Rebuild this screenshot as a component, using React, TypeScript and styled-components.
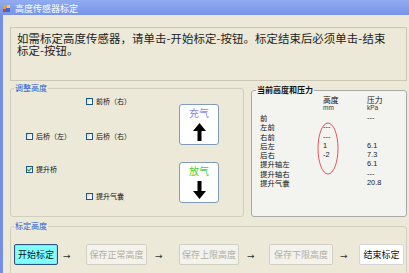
import React from "react"
import styled, { createGlobalStyle } from "styled-components"

const GlobalStyle = createGlobalStyle`
  html, body {
    margin: 0;
    padding: 0;
    background: #ece9d8;
    overflow: hidden;
  }
  body {
    font-family: "Noto Sans CJK SC", "Liberation Sans", sans-serif;
  }
`

const CJK = `"Noto Sans CJK SC", "Liberation Sans", sans-serif`
const LATIN = `"Liberation Sans", "Noto Sans CJK SC", sans-serif`

const Window = styled.div`
  width: 409px;
  height: 273px;
  display: flex;
  flex-direction: column;
  overflow: hidden;
`

const TitleBar = styled.div`
  height: 15px;
  flex: none;
  display: flex;
  align-items: center;
  gap: 5px;
  padding: 1px 0 0 3px;
  box-sizing: border-box;
  background: linear-gradient(#91acf0, #7794e6);
  color: #fff;
  font-family: ${CJK};
  font-size: 9px;
  line-height: 9px;
`

const Client = styled.div`
  flex: 1;
  min-height: 0;
  display: flex;
  flex-direction: column;
  border-left: 3px solid #7590e2;
  background: #ece9d8;
  padding: 12px 2px 0 7px;
`

const Notice = styled.div`
  height: 54px;
  flex: none;
  box-sizing: border-box;
  border: 1px solid #cbc8b8;
  padding: 4px 6px;
  font-family: ${CJK};
  font-size: 11.4px;
  line-height: 12px;
  letter-spacing: 0.1px;
  color: #1e1e1e;
`

const MidRow = styled.div`
  display: flex;
  align-items: flex-start;
  gap: 7px;
  margin-top: 3px;
`

const Group = styled.fieldset<{ $w: number; $h: number; $top?: number; $bg?: string; $edge?: string }>`
  margin: ${(p) => p.$top ?? 0}px 0 0 0;
  padding: 0;
  min-width: 0;
  box-sizing: border-box;
  width: ${(p) => p.$w}px;
  height: ${(p) => p.$h}px;
  flex: none;
  border: 1px solid ${(p) => p.$edge ?? "#d0cfbf"};
  border-radius: 3px;
  background: ${(p) => p.$bg ?? "transparent"};
`

const Legend = styled.legend<{ $strong?: boolean; $shift: number }>`
  padding: 0 1px;
  margin-left: ${(p) => p.$shift}px;
  font-family: ${CJK};
  font-size: 8px;
  line-height: 8px;
  font-weight: ${(p) => (p.$strong ? 700 : 400)};
  color: ${(p) => (p.$strong ? "#111" : "#2a5cd8")};
`

/* ---- adjust height group ---- */

const AdjustBody = styled.div`
  display: flex;
  align-items: flex-start;
  padding-left: 15px;
`

const CheckGrid = styled.div`
  display: grid;
  grid-template-columns: 60px 93px;
  grid-template-rows: 14px 35px 33px 27px;
  margin-top: 2px;
`

const CheckItem = styled.label<{ $col: number; $row: number }>`
  grid-column: ${(p) => p.$col};
  grid-row: ${(p) => p.$row};
  align-self: end;
  height: 14px;
  display: flex;
  align-items: center;
  gap: 3px;
  font-family: ${CJK};
  font-size: 7px;
  line-height: 7px;
  color: #111;
`

const Box = styled.span`
  width: 7px;
  height: 7px;
  box-sizing: border-box;
  border: 1px solid #1f5487;
  background: linear-gradient(135deg, #dcdbd3, #ffffff);
  display: inline-flex;
  align-items: center;
  justify-content: center;
`

const AirColumn = styled.div`
  display: flex;
  flex-direction: column;
  gap: 17px;
  margin-top: 12px;
`

const AirButton = styled.div`
  width: 40px;
  height: 41px;
  box-sizing: border-box;
  border: 1px solid #7f9db9;
  border-radius: 3px;
  background: #fff;
  display: flex;
  flex-direction: column;
  align-items: center;
  padding-top: 3px;
  gap: 5px;
`

const AirLabel = styled.span<{ $tone: string }>`
  font-family: ${CJK};
  font-size: 10px;
  line-height: 10px;
  color: ${(p) => p.$tone};
`

/* ---- current values group ---- */

const Table = styled.div`
  padding-left: 8px;
  margin-top: 1px;
`

const HeadGrid = styled.div`
  display: grid;
  grid-template-columns: 63px 44px auto;
  grid-template-rows: 9px 8px;
  color: #111;
`

const HeadCell = styled.span<{ $unit?: boolean }>`
  font-family: ${(p) => (p.$unit ? LATIN : CJK)};
  font-size: ${(p) => (p.$unit ? 6.5 : 7.8)}px;
  line-height: ${(p) => (p.$unit ? 8 : 9)}px;
  color: ${(p) => (p.$unit ? "#333" : "#111")};
`

const DataGrid = styled.div`
  position: relative;
  display: grid;
  grid-template-columns: 63px 44px auto;
  grid-auto-rows: 9.3px;
  margin-top: 1px;
`

const RowName = styled.span`
  font-family: ${CJK};
  font-size: 7.4px;
  line-height: 9.3px;
  color: #111;
`

const Value = styled.span`
  font-family: ${LATIN};
  font-size: 7.4px;
  line-height: 9.3px;
  color: #222;
`

const Mark = styled.svg`
  position: absolute;
  left: 57px;
  top: 9px;
`

/* ---- calibration group ---- */

const StepRow = styled.div`
  display: flex;
  align-items: flex-start;
  margin-top: 14px;
  padding-left: 3px;
`

type StepState = "active" | "off" | "plain"

const StepButton = styled.div<{ $w: number; $state: StepState }>`
  width: ${(p) => p.$w}px;
  height: 21px;
  box-sizing: border-box;
  flex: none;
  display: flex;
  align-items: center;
  justify-content: center;
  border-radius: 2px;
  font-family: ${CJK};
  font-size: 9px;
  line-height: 9px;
  border: 1px solid
    ${(p) => (p.$state === "active" ? "#30507f" : p.$state === "off" ? "#d2d0c2" : "#d6d6d6")};
  background: ${(p) => (p.$state === "active" ? "#80ffff" : p.$state === "off" ? "#f3f2ec" : "#ffffff")};
  color: ${(p) => (p.$state === "off" ? "#b2af9f" : "#111")};
  box-shadow: ${(p) => (p.$state === "active" ? "inset 0 0 0 1px #9fdcf4" : "none")};
`

const StepArrow = styled.span<{ $w: number; $pad: number }>`
  width: ${(p) => p.$w}px;
  padding-left: ${(p) => p.$pad}px;
  box-sizing: border-box;
  flex: none;
  margin-top: 6px;
  font-family: "DejaVu Sans", sans-serif;
  font-size: 9px;
  line-height: 12px;
  color: #333;
`

const AppIcon = () => (
  <svg width="7" height="7" viewBox="0 0 7 7">
    <rect x="0" y="0" width="4" height="4" fill="#f0a020" />
    <rect x="3" y="3" width="4" height="4" fill="#3a64d8" />
    <rect x="0" y="4" width="3" height="3" fill="#d83a2a" />
    <rect x="4" y="0" width="3" height="3" fill="#e8d060" />
  </svg>
)

const Tick = () => (
  <svg width="5" height="5" viewBox="0 0 5 5">
    <path d="M0.5 2.4 L2 3.9 L4.6 0.8" fill="none" stroke="#21a121" strokeWidth="1.2" />
  </svg>
)

const BigArrow = ({ down }: { down?: boolean }) => (
  <svg width="13" height="18" viewBox="0 0 13 18">
    <polygon
      points="6.5,0 13,8 8.5,8 8.5,18 4.5,18 4.5,8 0,8"
      fill="#000"
      transform={down ? "rotate(180 6.5 9)" : undefined}
    />
  </svg>
)

type Check = { col: number; row: number; text: string; on?: boolean }

const checks: Check[] = [
  { col: 2, row: 1, text: "前桥（右）" },
  { col: 1, row: 2, text: "后桥（左）" },
  { col: 2, row: 2, text: "后桥（右）" },
  { col: 1, row: 3, text: "提升桥", on: true },
  { col: 2, row: 4, text: "提升气囊" },
]

const readings: [string, string, string][] = [
  ["前", "", "---"],
  ["左前", "---", ""],
  ["右前", "---", ""],
  ["后左", "1", "6.1"],
  ["后右", "-2", "7.3"],
  ["提升轴左", "", "6.1"],
  ["提升轴右", "", "---"],
  ["提升气囊", "", "20.8"],
]

const steps: { text: string; w: number; state: StepState; arrow?: [number, number] }[] = [
  { text: "开始标定", w: 44, state: "active", arrow: [28, 5] },
  { text: "保存正常高度", w: 61, state: "off", arrow: [32, 8] },
  { text: "保存上限高度", w: 60, state: "off", arrow: [30, 8] },
  { text: "保存下限高度", w: 64, state: "off", arrow: [26, 7] },
  { text: "结束标定", w: 45, state: "plain" },
]

export default function App() {
  return (
    <>
      <GlobalStyle />
      <Window>
        <TitleBar>
          <AppIcon />
          <span>高度传感器标定</span>
        </TitleBar>
        <Client>
          <Notice>
            如需标定高度传感器，请单击-开始标定-按钮。标定结束后必须单击-结束
            <br />
            标定-按钮。
          </Notice>

          <MidRow>
            <Group $w={234} $h={133}>
              <Legend $shift={3}>调整高度</Legend>
              <AdjustBody>
                <CheckGrid>
                  {checks.map((c) => (
                    <CheckItem key={c.text + c.col} $col={c.col} $row={c.row}>
                      <Box>{c.on && <Tick />}</Box>
                      {c.text}
                    </CheckItem>
                  ))}
                </CheckGrid>
                <AirColumn>
                  <AirButton>
                    <AirLabel $tone="#8585ff">充气</AirLabel>
                    <BigArrow />
                  </AirButton>
                  <AirButton>
                    <AirLabel $tone="#3fcf3f">放气</AirLabel>
                    <BigArrow down />
                  </AirButton>
                </AirColumn>
              </AdjustBody>
            </Group>

            <Group $w={156} $h={131} $top={2} $bg="#f3f3f0" $edge="#a9a9a6">
              <Legend $shift={4} $strong>
                当前高度和压力
              </Legend>
              <Table>
                <HeadGrid>
                  <span />
                  <HeadCell>高度</HeadCell>
                  <HeadCell>压力</HeadCell>
                  <span />
                  <HeadCell $unit>mm</HeadCell>
                  <HeadCell $unit>kPa</HeadCell>
                </HeadGrid>
                <DataGrid>
                  {readings.map(([name, h, p]) => (
                    <React.Fragment key={name}>
                      <RowName>{name}</RowName>
                      <Value>{h}</Value>
                      <Value>{p}</Value>
                    </React.Fragment>
                  ))}
                  <Mark width="22" height="53" viewBox="0 0 22 53">
                    <ellipse cx="11" cy="26.5" rx="10" ry="25.5" fill="none" stroke="#e6525e" strokeWidth="1" />
                  </Mark>
                </DataGrid>
              </Table>
            </Group>
          </MidRow>

          <Group $w={397} $h={56} $top={5}>
            <Legend $shift={3}>标定高度</Legend>
            <StepRow>
              {steps.map((s) => (
                <React.Fragment key={s.text}>
                  <StepButton $w={s.w} $state={s.state}>
                    {s.text}
                  </StepButton>
                  {s.arrow && (
                    <StepArrow $w={s.arrow[0]} $pad={s.arrow[1]}>
                      →
                    </StepArrow>
                  )}
                </React.Fragment>
              ))}
            </StepRow>
          </Group>
        </Client>
      </Window>
    </>
  )
}
